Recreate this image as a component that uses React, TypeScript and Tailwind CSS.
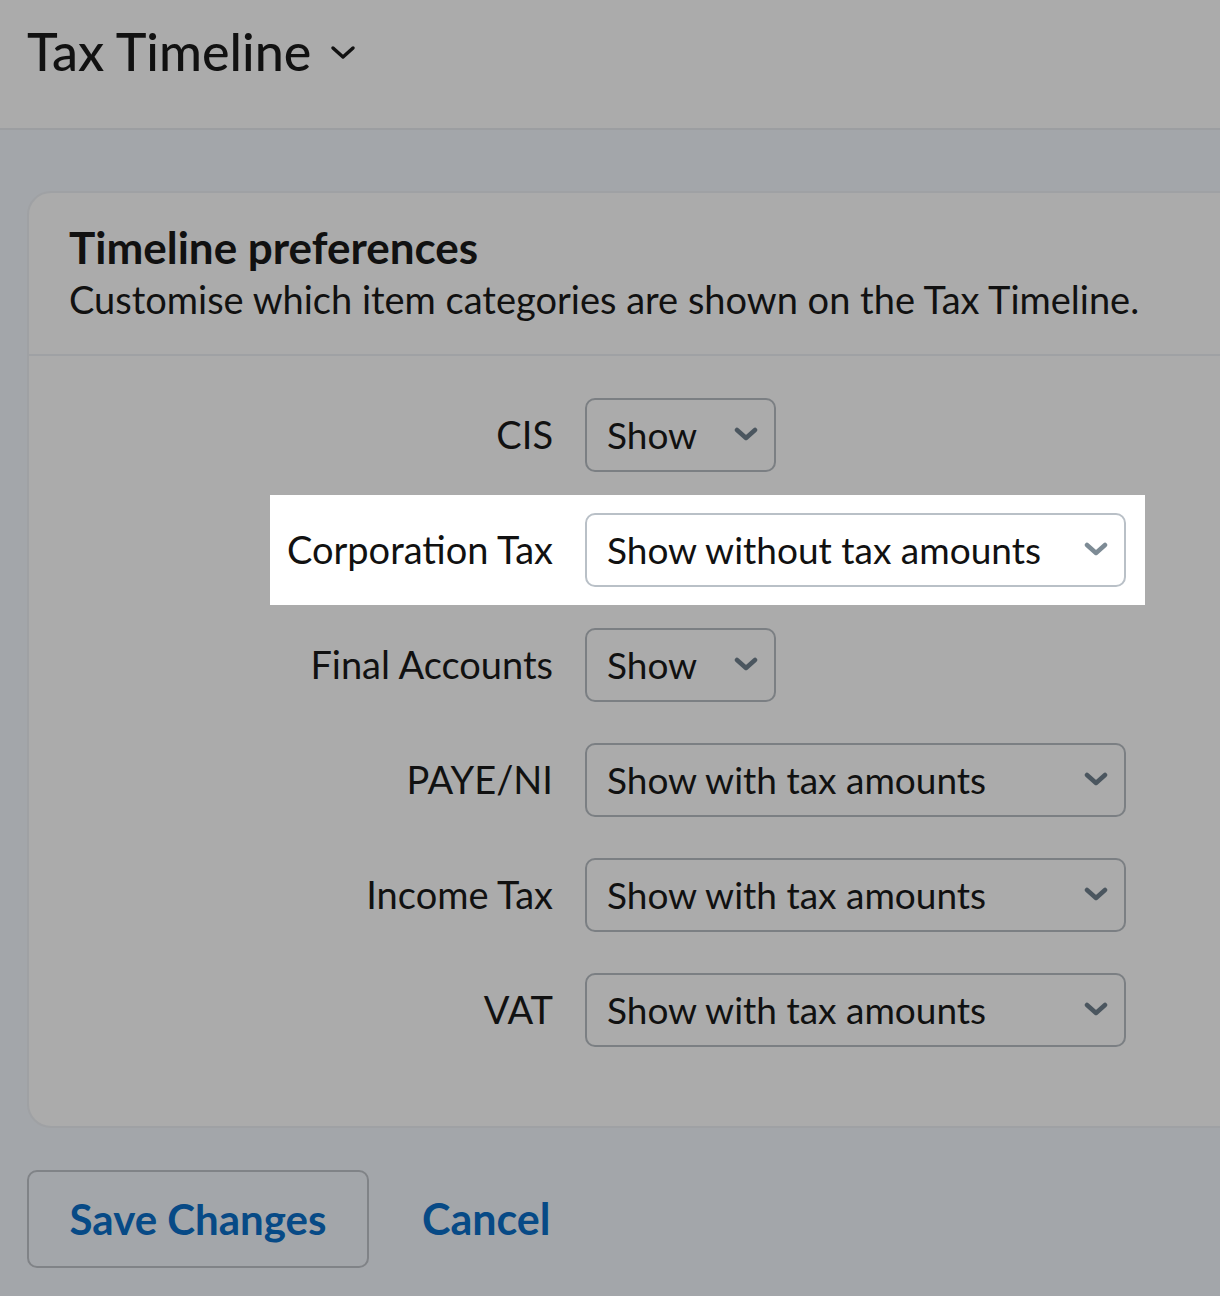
import React from 'react';

type Row = {
    label: string;
    value: string;
    wide: boolean;
    highlight?: boolean;
};

const rows: Row[] = [
    { label: 'CIS', value: 'Show', wide: false },
    { label: 'Corporation Tax', value: 'Show without tax amounts', wide: true, highlight: true },
    { label: 'Final Accounts', value: 'Show', wide: false },
    { label: 'PAYE/NI', value: 'Show with tax amounts', wide: true },
    { label: 'Income Tax', value: 'Show with tax amounts', wide: true },
    { label: 'VAT', value: 'Show with tax amounts', wide: true },
];

function Chevron({ light }: { light?: boolean }) {
    return (
        <svg width="24" height="16" viewBox="0 0 24 16" fill="none">
            <polyline
                points="3,3 12,11 21,3"
                stroke={light ? '#7d8b95' : '#4b565f'}
                strokeWidth="4.5"
                strokeLinecap="round"
                strokeLinejoin="round"
            />
        </svg>
    );
}

function FakeSelect({ value, wide, light }: { value: string; wide: boolean; light?: boolean }) {
    return (
        <div
            className={`flex h-[74px] items-center justify-between rounded-[10px] border-2 pr-[16px] pl-[20px] ${
                wide ? 'w-[541px]' : 'w-[191px]'
            } ${light ? 'border-[#b9c0c7] bg-white' : 'border-[#7b7f83]'}`}
        >
            <span className="text-[37px] text-[#111]">{value}</span>
            <Chevron light={light} />
        </div>
    );
}

export default function App() {
    return (
        <div className="h-[1296px] w-[1220px] overflow-hidden bg-[#a3a6aa] font-['Lato',sans-serif] text-[#111]">
            <header className="flex h-[130px] items-start border-b-2 border-[#9c9ea1] bg-[#ababab] pt-[12px] pl-[27px]">
                <h1 className="text-[52px] font-medium">Tax Timeline</h1>
                <svg className="mt-[32px] ml-[18px]" width="28" height="18" viewBox="0 0 28 18" fill="none">
                    <polyline points="4,4 14,13 24,4" stroke="#111" strokeWidth="3.5" strokeLinecap="round" strokeLinejoin="round" />
                </svg>
            </header>

            <main className="pt-[61px] pl-[27px]">
                <div className="w-[1240px] rounded-[24px] border-2 border-[#9fa1a4] bg-[#ababab]">
                    <div className="border-b-2 border-[#9fa1a4] px-[40px] pt-[29px] pb-[30px]">
                        <h2 className="text-[44px] leading-[50px] font-bold">Timeline preferences</h2>
                        <p className="mt-[2px] text-[38px] leading-[50px]">Customise which item categories are shown on the Tax Timeline.</p>
                    </div>

                    <div className="pt-[21px] pb-[59px]">
                        {rows.map((row) =>
                            row.highlight ? (
                                <div key={row.label} className="flex h-[115px] items-center">
                                    <div className="ml-[241px] flex h-[110px] w-[875px] items-center gap-[32px] bg-white pr-[19px]">
                                        <span className="flex-1 text-right text-[38px]">{row.label}</span>
                                        <FakeSelect value={row.value} wide={row.wide} light />
                                    </div>
                                </div>
                            ) : (
                                <div key={row.label} className="flex h-[115px] items-center gap-[32px]">
                                    <span className="w-[524px] text-right text-[38px]">{row.label}</span>
                                    <FakeSelect value={row.value} wide={row.wide} />
                                </div>
                            ),
                        )}
                    </div>
                </div>

                <div className="mt-[42px] flex items-center gap-[53px]">
                    <button className="h-[98px] w-[342px] rounded-[10px] border-2 border-[#808387] text-[42px] font-bold text-[#074a86]">
                        Save Changes
                    </button>
                    <button className="text-[43px] font-bold text-[#074a86]">Cancel</button>
                </div>
            </main>
        </div>
    );
}
